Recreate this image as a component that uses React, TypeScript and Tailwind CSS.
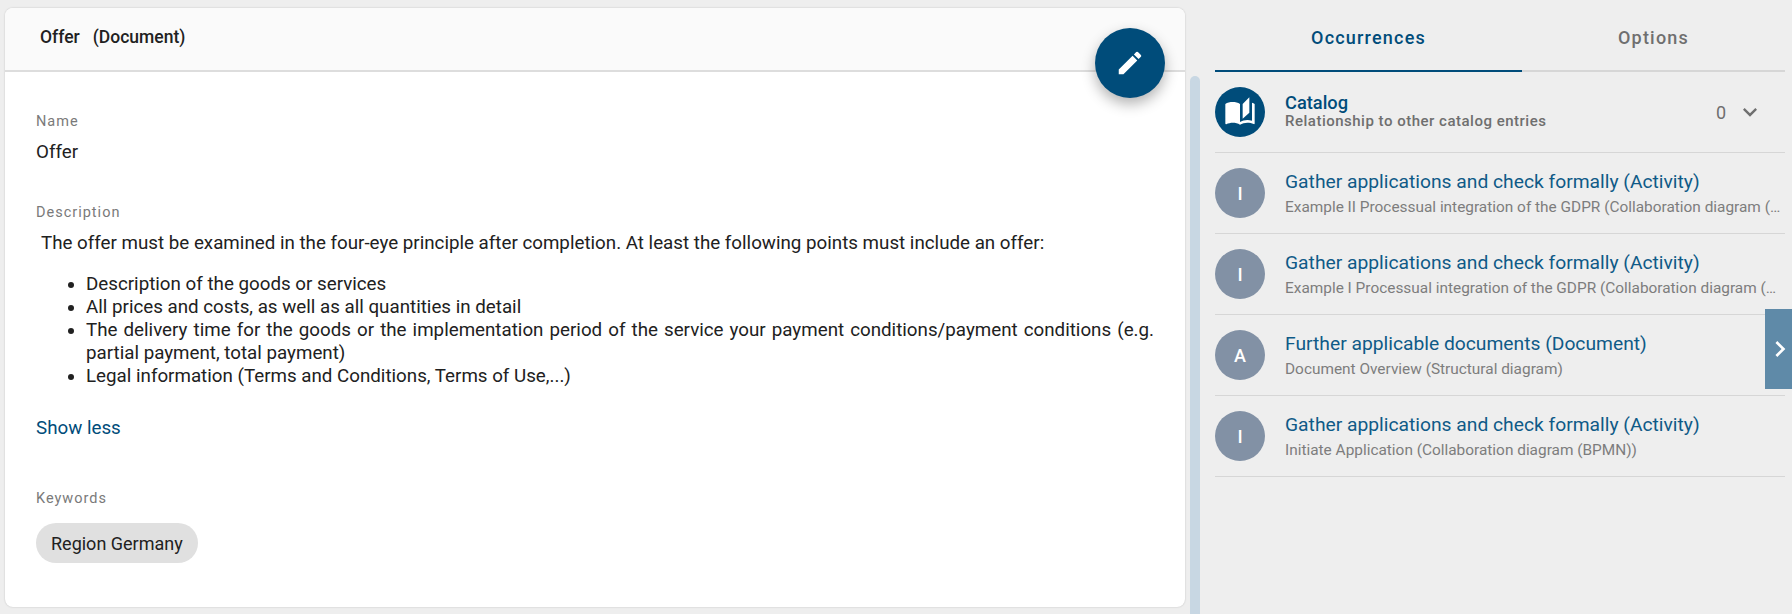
import { MdEdit, MdAutoStories, MdKeyboardArrowDown, MdChevronRight } from 'react-icons/md'

const occurrences = [
  { letter: 'I', title: 'Gather applications and check formally (Activity)', sub: 'Example II Processual integration of the GDPR (Collaboration diagram (BPMN))' },
  { letter: 'I', title: 'Gather applications and check formally (Activity)', sub: 'Example I Processual integration of the GDPR (Collaboration diagram (BPMN))' },
  { letter: 'A', title: 'Further applicable documents (Document)', sub: 'Document Overview (Structural diagram)' },
  { letter: 'I', title: 'Gather applications and check formally (Activity)', sub: 'Initiate Application (Collaboration diagram (BPMN))' },
]

export default function App() {
  return (
    <div className="relative flex h-[614px] w-[1792px] overflow-hidden bg-[#eeeeee] font-['Roboto',sans-serif] text-[#212121]">
      {/* Document card */}
      <div className="relative mt-2 ml-[5px] h-[599px] w-[1180px] shrink-0 rounded-lg bg-white shadow-[0_0_2px_rgba(0,0,0,0.2)]">
        <div className="flex h-[64px] items-center rounded-t-lg border-b-2 border-[#dddddd] bg-[#fafafa] pb-[3px] pl-[35px] text-[17.5px] font-medium">
          <span>Offer</span>
          <span className="ml-[13px]">(Document)</span>
        </div>

        <button className="absolute top-5 right-5 flex h-[70px] w-[70px] items-center justify-center rounded-full bg-[#004c7a] text-white shadow-[0_6px_14px_rgba(0,0,0,0.3)]">
          <MdEdit size={30} />
        </button>

        <div className="pt-[40px] pr-[31px] pl-[31px]">
          <div className="text-[14.5px] leading-5 tracking-[1px] text-[#7a7a7a]">Name</div>
          <div className="mt-[9px] text-[18.75px] leading-[23px]">Offer</div>

          <div className="mt-[39px] text-[14.5px] leading-5 tracking-[1px] text-[#7a7a7a]">Description</div>
          <div className="mt-[9px] pl-[5px] text-[18.75px] leading-[23px]">
            <p>The offer must be examined in the four-eye principle after completion. At least the following points must include an offer:</p>
            <ul className="mt-[18px] list-disc pl-[45px] text-justify">
              <li>Description of the goods or services</li>
              <li>All prices and costs, as well as all quantities in detail</li>
              <li>The delivery time for the goods or the implementation period of the service your payment conditions/payment conditions (e.g. partial payment, total payment)</li>
              <li>Legal information (Terms and Conditions, Terms of Use,...)</li>
            </ul>
          </div>

          <div className="mt-[29px] text-[18.75px] leading-[23px] text-[#004c7a]">Show less</div>

          <div className="mt-[49px] text-[14.5px] leading-5 tracking-[1px] text-[#7a7a7a]">Keywords</div>
          <div className="mt-[14px] inline-flex h-10 items-center rounded-full bg-[#e0e0e0] px-[15px] text-[18px]">Region Germany</div>
        </div>
      </div>

      {/* Scrollbar */}
      <div className="mt-[76px] ml-[5px] h-[538px] w-[10px] shrink-0 rounded-t-md bg-[#c8d7e3]" />

      {/* Side panel */}
      <div className="ml-[15px] w-[570px] shrink-0">
        <div className="flex h-[72px] border-b-2 border-[#d6d6d6] text-[18px] font-medium tracking-[1.2px]">
          <div className="-mb-[2px] flex w-[307px] items-center justify-center border-b-2 border-[#004c7a] pt-[5px] text-[#004c7a]">Occurrences</div>
          <div className="flex flex-1 items-center justify-center pt-[5px] text-[#6f6f6f]">Options</div>
        </div>

        <div className="flex h-[81px] items-center border-b border-[#d6d6d6]">
          <div className="flex h-[50px] w-[50px] shrink-0 items-center justify-center rounded-full bg-[#004c7a] text-white">
            <MdAutoStories size={32} />
          </div>
          <div className="ml-5 min-w-0 flex-1">
            <div className="-mt-px text-[18.25px] leading-5 font-medium text-[#004c7a]">Catalog</div>
            <div className="text-[15px] leading-[17px] font-medium tracking-[0.5px] text-[#6f6f6f]">Relationship to other catalog entries</div>
          </div>
          <span className="text-[18px] text-[#6f6f6f]">0</span>
          <MdKeyboardArrowDown size={28} className="mr-[21px] ml-[10px] text-[#6f6f6f]" />
        </div>

        {occurrences.map((item, i) => (
          <div key={i} className="flex h-[81px] items-center border-b border-[#d6d6d6]">
            <div className="flex h-[50px] w-[50px] shrink-0 items-center justify-center rounded-full bg-[#8291a5] text-[18px] font-medium text-white">
              {item.letter}
            </div>
            <div className="ml-5 min-w-0 flex-1">
              <div className="text-[19.25px] leading-[24px] text-[#0f5a87]">{item.title}</div>
              <div className="mt-[4px] truncate text-[15.4px] leading-[18px] text-[#7d7d7d]">{item.sub}</div>
            </div>
          </div>
        ))}
      </div>

      {/* Sidebar toggle */}
      <button className="absolute top-[309px] right-0 flex h-[80px] w-[27px] items-center justify-center bg-[#5f8aa8] pl-[3px] text-white">
        <MdChevronRight size={32} className="shrink-0" />
      </button>
    </div>
  )
}
